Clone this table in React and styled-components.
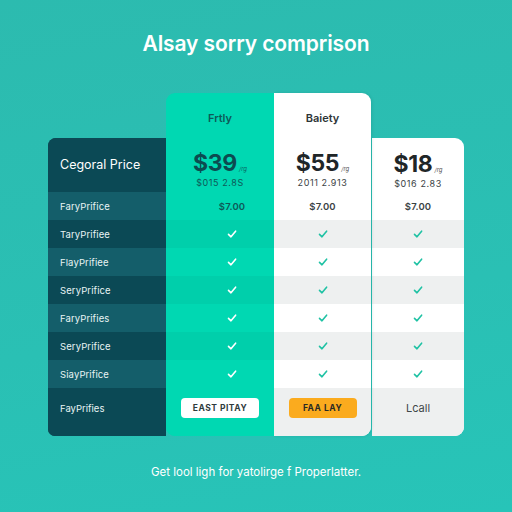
import React from "react";
import styled, { createGlobalStyle } from "styled-components";

const Global = createGlobalStyle`
  body {
    margin: 0;
    font-family: Inter, "Liberation Sans", sans-serif;
  }
`;

const Page = styled.div`
  width: 512px;
  height: 512px;
  background: linear-gradient(170deg, #2cbbaf 0%, #2ac0b4 60%, #27c4b8 100%);
  display: flex;
  flex-direction: column;
  align-items: center;
  overflow: hidden;
`;

const Title = styled.h1`
  margin: 31px 0 0;
  font-size: 21px;
  line-height: 26px;
  font-weight: 600;
  color: #ffffff;
  letter-spacing: -0.1px;
`;

const Table = styled.div`
  margin-top: 36px;
  width: 416px;
  display: flex;
  align-items: flex-end;
`;

const Column = styled.div`
  width: ${(p) => p.$w}px;
  display: flex;
  flex-direction: column;
  border-radius: ${(p) => p.$radius};
  overflow: hidden;
  background: ${(p) => p.$bg};
  box-shadow: ${(p) => p.$shadow || "none"};
  margin-left: ${(p) => p.$ml || 0}px;
  position: relative;
  z-index: ${(p) => p.$z || 0};
`;

const Head = styled.div`
  height: ${(p) => p.$h}px;
  display: flex;
  flex-direction: column;
  align-items: ${(p) => (p.$left ? "flex-start" : "center")};
  justify-content: ${(p) => (p.$left ? "center" : "flex-start")};
  padding: ${(p) => (p.$left ? "0 0 0 12px" : "0")};
  box-sizing: border-box;
  background: ${(p) => p.$bg || "transparent"};
`;

const PlanName = styled.div`
  margin-top: 18px;
  height: 17px;
  font-size: 11px;
  font-weight: 600;
  color: ${(p) => p.$color};
`;

const PriceRow = styled.div`
  margin-top: ${(p) => p.$mt}px;
  display: flex;
  align-items: baseline;
  color: ${(p) => p.$color};
`;

const Price = styled.span`
  font-size: 23px;
  font-weight: 700;
  letter-spacing: -0.3px;
`;

const Per = styled.span`
  font-size: 6px;
  margin-left: 2px;
  font-style: italic;
  opacity: 0.8;
`;

const Sub = styled.div`
  margin-top: 0;
  font-size: 9px;
  letter-spacing: 0.6px;
  color: ${(p) => p.$color};
`;

const HeadLabel = styled.div`
  font-size: 12.5px;
  color: #ffffff;
  margin-top: -2px;
`;

const Row = styled.div`
  height: 28px;
  display: flex;
  align-items: center;
  justify-content: ${(p) => (p.$left ? "flex-start" : "center")};
  padding-left: ${(p) => p.$pl || 0}px;
  background: ${(p) => p.$bg};
  font-size: 9.5px;
  font-weight: ${(p) => (p.$bold ? 600 : 400)};
  color: ${(p) => p.$color};
  letter-spacing: 0.1px;
`;

const Foot = styled.div`
  height: 48px;
  display: flex;
  align-items: center;
  justify-content: ${(p) => (p.$left ? "flex-start" : "center")};
  padding-left: ${(p) => (p.$left ? 12 : 0)}px;
  padding-bottom: 8px;
  box-sizing: border-box;
  background: ${(p) => p.$bg};
  font-size: ${(p) => (p.$left ? 9.5 : 11)}px;
  color: ${(p) => p.$color};
`;

const Button = styled.button`
  width: ${(p) => p.$w}px;
  height: 20px;
  border: none;
  border-radius: 4px;
  background: ${(p) => p.$bg};
  color: ${(p) => p.$color};
  font-family: inherit;
  font-size: 8.5px;
  font-weight: 700;
  letter-spacing: 0.5px;
  padding: 0;
`;

const Footer = styled.p`
  margin: 29px 0 0;
  font-size: 11.5px;
  color: #ffffff;
`;

const Check = ({ color }) => (
  <svg width="10" height="10" viewBox="0 0 10 10" fill="none">
    <path d="M1.5 5.4 L4 7.8 L8.6 2.2" stroke={color} strokeWidth="1.6" strokeLinecap="round" strokeLinejoin="round" />
  </svg>
);

const labels = [
  "FaryPrifice",
  "TaryPrifiee",
  "FlayPrifiee",
  "SeryPrifice",
  "FaryPrifies",
  "SeryPrifice",
  "SiayPrifice",
];

const leftBg = (i) => (i % 2 === 0 ? "#145e6a" : "#0b4955");
const mintBg = (i) => (i % 2 === 0 ? "#00d8b2" : "#00cfab");
const whiteBg = (i) => (i % 2 === 0 ? "#ffffff" : "#eef0f0");

const App = () => {
  return (
    <Page>
      <Global />
      <Title>Alsay sorry comprison</Title>
      <Table>
        <Column $w={118} $radius="8px 0 0 7px" $bg="#0b4955">
          <Head $h={54} $left $bg="#0b4955">
            <HeadLabel>Cegoral Price</HeadLabel>
          </Head>
          {labels.map((l, i) => (
            <Row key={i} $left $pl={12} $bg={leftBg(i)} $color="#e8f4f4">
              {l}
            </Row>
          ))}
          <Foot $left $bg="#0b4955" $color="#e8f4f4">
            FayPrifies
          </Foot>
        </Column>

        <Column $w={108} $radius="9px 0 0 9px" $bg="#00d8b2" $z={2}>
          <Head $h={99}>
            <PlanName $color="#0e5a58">Frtly</PlanName>
            <PriceRow $mt={21} $color="#0c4b50">
              <Price>$39</Price>
              <Per>/rg</Per>
            </PriceRow>
            <Sub $color="#0e5a58">$015 2.8S</Sub>
          </Head>
          {labels.map((l, i) => (
            <Row key={i} $pl={24} $bg={mintBg(i)} $bold $color="#0e5a58">
              {i === 0 ? "$7.00" : <Check color="#ffffff" />}
            </Row>
          ))}
          <Foot $bg="#00d8b2">
            <Button $w={78} $bg="#ffffff" $color="#2f3b3d">
              EAST PITAY
            </Button>
          </Foot>
        </Column>

        <Column $w={97} $radius="0 9px 9px 0" $bg="#ffffff" $z={1} $shadow="1px 0 3px rgba(0,60,60,0.12)">
          <Head $h={99}>
            <PlanName $color="#2d3436">Baiety</PlanName>
            <PriceRow $mt={21} $color="#1f2628">
              <Price>$55</Price>
              <Per>/rg</Per>
            </PriceRow>
            <Sub $color="#3a4244">2011 2.913</Sub>
          </Head>
          {labels.map((l, i) => (
            <Row key={i} $bg={whiteBg(i)} $bold $color="#3a4244">
              {i === 0 ? "$7.00" : <Check color="#1fc2a4" />}
            </Row>
          ))}
          <Foot $bg="#eef0f0">
            <Button $w={68} $bg="#fbab1e" $color="#2b2a24">
              FAA LAY
            </Button>
          </Foot>
        </Column>

        <Column $w={92} $ml={1} $radius="0 9px 9px 0" $bg="#ffffff">
          <Head $h={54}>
            <PriceRow $mt={12} $color="#1f2628">
              <Price>$18</Price>
              <Per>/rg</Per>
            </PriceRow>
            <Sub $color="#3a4244">$016 2.83</Sub>
          </Head>
          {labels.map((l, i) => (
            <Row key={i} $bg={whiteBg(i)} $bold $color="#3a4244">
              {i === 0 ? "$7.00" : <Check color="#1fc2a4" />}
            </Row>
          ))}
          <Foot $bg="#eef0f0" $color="#3f4749">
            Lcall
          </Foot>
        </Column>
      </Table>
      <Footer>Get lool ligh for yatolirge f Properlatter.</Footer>
    </Page>
  );
};

export default App;
